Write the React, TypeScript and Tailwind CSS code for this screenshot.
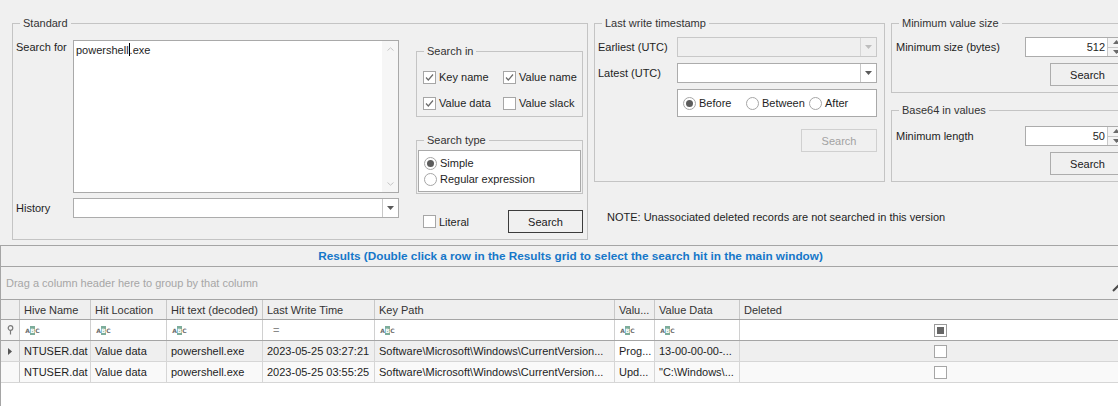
import type { ReactNode } from 'react';
import clsx from 'clsx';

function Group({ title, className, children }: { title: string; className?: string; children?: ReactNode }) {
  return (
    <div className={clsx('relative border border-[#c4c4c4]', className)}>
      <span className="absolute -top-[8px] left-[7px] bg-[#f0f0f0] px-[3px] leading-[14px] text-[#333]">{title}</span>
      {children}
    </div>
  );
}

function Check({ checked }: { checked?: boolean }) {
  return (
    <span className="inline-flex h-[13px] w-[13px] shrink-0 items-center justify-center border border-[#a6a6a6] bg-white">
      {checked && (
        <svg width="11" height="11" viewBox="0 0 11 11">
          <path d="M2 5.5 L4.3 8 L9 2.5" fill="none" stroke="#6b6b6b" strokeWidth="1.2" />
        </svg>
      )}
    </span>
  );
}

function Radio({ on }: { on?: boolean }) {
  return (
    <span className="inline-flex h-[13px] w-[13px] shrink-0 items-center justify-center rounded-full border border-[#a6a6a6] bg-white">
      {on && <span className="h-[7px] w-[7px] rounded-full bg-[#5c5c5c]" />}
    </span>
  );
}

function Arrow({ color = '#5a5a5a' }: { color?: string }) {
  return (
    <svg width="7" height="4" viewBox="0 0 7 4">
      <path d="M0 0 H7 L3.5 4 Z" fill={color} />
    </svg>
  );
}

function Combo({ disabled, className }: { disabled?: boolean; className?: string }) {
  return (
    <div
      className={clsx(
        'flex h-[20px] border',
        disabled ? 'border-[#c8c8c8] bg-[#efefef]' : 'border-[#acacac] bg-white',
        className,
      )}
    >
      <div className="flex-1" />
      <div className={clsx('flex w-[16px] items-center justify-center border-l', disabled ? 'border-[#d6d6d6]' : 'border-[#c8c8c8]')}>
        <Arrow color={disabled ? '#bdbdbd' : '#5a5a5a'} />
      </div>
    </div>
  );
}

function Spin({ value }: { value: string }) {
  return (
    <div className="flex h-[20px] w-[100px] border border-[#acacac] bg-white">
      <div className="flex flex-1 items-center justify-end pr-[2px]">{value}</div>
      <div className="flex w-[17px] flex-col border-l border-[#c8c8c8] bg-[#f4f4f4]">
        <div className="flex flex-1 items-center justify-center border-b border-[#c8c8c8]">
          <svg width="7" height="4" viewBox="0 0 7 4">
            <path d="M0 4 H7 L3.5 0 Z" fill="#6a6a6a" />
          </svg>
        </div>
        <div className="flex flex-1 items-center justify-center">
          <Arrow color="#6a6a6a" />
        </div>
      </div>
    </div>
  );
}

function Button({ label, variant = 'normal', className }: { label: string; variant?: 'normal' | 'default' | 'disabled'; className?: string }) {
  return (
    <div
      className={clsx(
        'flex h-[23px] w-[75px] items-center justify-center border bg-[#f0f0f0]',
        variant === 'default' && 'border-[#3c3c3c] text-[#202020]',
        variant === 'normal' && 'border-[#adadad] text-[#202020]',
        variant === 'disabled' && 'border-[#d0d0d0] text-[#a2a2a2]',
        className,
      )}
    >
      {label}
    </div>
  );
}

function Abc() {
  return (
    <span className="inline-flex h-[9px] items-center font-['DejaVu_Sans',sans-serif] text-[6px] leading-[9px] font-bold text-[#6a6a6a]">
      <span className="w-[5px] text-center">A</span>
      <span className="w-[5px] bg-[#7dad9b] text-center text-white">B</span>
      <span className="w-[5px] text-center">C</span>
    </span>
  );
}

const columns = [
  { name: 'Hive Name', w: 'w-[71px]' },
  { name: 'Hit Location', w: 'w-[76px]' },
  { name: 'Hit text (decoded)', w: 'w-[96px]' },
  { name: 'Last Write Time', w: 'w-[112px]' },
  { name: 'Key Path', w: 'w-[240px]' },
  { name: 'Valu...', w: 'w-[40px]' },
  { name: 'Value Data', w: 'w-[85px]' },
];

const rows = [
  {
    cells: ['NTUSER.dat', 'Value data', 'powershell.exe', '2023-05-25 03:27:21', 'Software\\Microsoft\\Windows\\CurrentVersion...', 'Prog...', '13-00-00-00-...'],
    bg: 'bg-[#efefef]',
    focused: true,
  },
  {
    cells: ['NTUSER.dat', 'Value data', 'powershell.exe', '2023-05-25 03:55:25', 'Software\\Microsoft\\Windows\\CurrentVersion...', 'Upd...', '"C:\\Windows\\...'],
    bg: 'bg-[#f9f9f9]',
    focused: false,
  },
];

export default function App() {
  return (
    <div className="h-[406px] w-[1118px] overflow-hidden bg-[#f0f0f0] font-['Liberation_Sans',Arial,sans-serif] text-[11px] leading-[14px] text-[#1e1e1e]">
      {/* search options */}
      <div className="flex h-[245px] pt-[23px] pl-[12px]">
        <Group title="Standard" className="h-[217px] w-[576px] shrink-0">
          <div className="flex pt-[16px] pl-[3px]">
            <div className="flex flex-col">
              <div className="flex">
                <div className="w-[57px]">Search for</div>
                <div className="flex h-[153px] w-[326px] border border-[#a9a9a9] bg-white">
                  <div className="flex-1 pl-[2px]">
                    powershell<span className="inline-block h-[13px] w-px translate-y-[2px] bg-black" />.exe
                  </div>
                  <div className="flex w-[16px] flex-col items-center justify-between bg-[#f6f6f6] py-[6px]">
                    <svg width="7" height="4" viewBox="0 0 7 4">
                      <path d="M0.5 3.5 L3.5 0.8 L6.5 3.5" fill="none" stroke="#c6c6c6" strokeWidth="1" />
                    </svg>
                    <svg width="7" height="4" viewBox="0 0 7 4">
                      <path d="M0.5 0.5 L3.5 3.2 L6.5 0.5" fill="none" stroke="#c6c6c6" strokeWidth="1" />
                    </svg>
                  </div>
                </div>
              </div>
              <div className="mt-[5px] flex items-center">
                <div className="w-[57px]">History</div>
                <Combo className="w-[326px]" />
              </div>
            </div>

            <div className="mt-[11px] ml-[17px] flex w-[167px] flex-col">
              <Group title="Search in" className="h-[66px]">
                <div className="grid grid-cols-[80px_1fr] gap-y-[12px] pt-[18px] pl-[6px]">
                  <label className="flex items-center gap-[3px]"><Check checked />Key name</label>
                  <label className="flex items-center gap-[3px]"><Check checked />Value name</label>
                  <label className="flex items-center gap-[3px]"><Check checked />Value data</label>
                  <label className="flex items-center gap-[3px]"><Check />Value slack</label>
                </div>
              </Group>
              <Group title="Search type" className="mt-[23px] h-[54px]">
                <div className="mx-[1px] mt-[9px] flex h-[42px] flex-col border border-[#a9a9a9] bg-white pt-[4px] pl-[5px]">
                  <label className="flex h-[16px] items-center gap-[3px]"><Radio on />Simple</label>
                  <label className="flex h-[16px] items-center gap-[3px]"><Radio />Regular expression</label>
                </div>
              </Group>
              <div className="mt-[16px] flex items-center justify-between pl-[7px]">
                <label className="flex items-center gap-[3px]"><Check />Literal</label>
                <Button label="Search" variant="default" />
              </div>
            </div>
          </div>
        </Group>

        <div className="ml-[6px] flex w-[291px] shrink-0 flex-col">
          <Group title="Last write timestamp" className="h-[159px]">
            <div className="flex flex-col gap-[6px] pt-[13px] pl-[3px]">
              <div className="flex items-center">
                <div className="w-[79px]">Earliest (UTC)</div>
                <Combo disabled className="w-[200px]" />
              </div>
              <div className="flex items-center">
                <div className="w-[79px]">Latest (UTC)</div>
                <Combo className="w-[200px]" />
              </div>
              <div className="ml-[79px] flex h-[28px] w-[200px] items-center border border-[#a9a9a9] bg-white pl-[5px]">
                <label className="flex w-[63px] items-center gap-[3px]"><Radio on />Before</label>
                <label className="flex w-[63px] items-center gap-[3px]"><Radio />Between</label>
                <label className="flex items-center gap-[3px]"><Radio />After</label>
              </div>
              <Button label="Search" variant="disabled" className="mt-[6px] ml-[203px] w-[76px]" />
            </div>
          </Group>
          <div className="mt-[28px] ml-[13px] whitespace-nowrap">NOTE: Unassociated deleted records are not searched in this version</div>
        </div>

        <div className="ml-[6px] flex w-[240px] shrink-0 flex-col">
          <Group title="Minimum value size" className="h-[70px]">
            <div className="flex flex-col pt-[13px] pl-[4px]">
              <div className="flex items-center">
                <div className="w-[129px]">Minimum size (bytes)</div>
                <Spin value="512" />
              </div>
              <Button label="Search" className="mt-[6px] ml-[154px]" />
            </div>
          </Group>
          <Group title="Base64 in values" className="mt-[17px] h-[72px]">
            <div className="flex flex-col pt-[15px] pl-[4px]">
              <div className="flex items-center">
                <div className="w-[129px]">Minimum length</div>
                <Spin value="50" />
              </div>
              <Button label="Search" className="mt-[6px] ml-[154px]" />
            </div>
          </Group>
        </div>
      </div>

      {/* results grid */}
      <div className="h-[200px] w-[1140px] border-t border-l border-[#a5a5a5] bg-white">
        <div className="flex h-[21px] items-center justify-center border-b border-[#a5a5a5] bg-[#f0f0f0] text-[11.75px] font-bold text-[#1677c9]">
          Results (Double click a row in the Results grid to select the search hit in the main window)
        </div>
        <div className="relative flex h-[33px] items-center border-b border-[#a5a5a5] bg-[#f0f0f0] pl-[5px] text-[#a6a6a6]">
          Drag a column header here to group by that column
          <svg className="absolute top-[17px] left-[1111px]" width="8" height="8" viewBox="0 0 8 8">
            <path d="M1 7 L7 1" stroke="#4a4a4a" strokeWidth="2" />
          </svg>
        </div>

        <div className="flex h-[20px] border-b border-[#a5a5a5] bg-[#efefef] text-[#333]">
          <div className="w-[19px] border-r border-[#c8c8c8]" />
          {columns.map((c) => (
            <div key={c.name} className={clsx('flex items-center overflow-hidden border-r border-[#c8c8c8] pl-[4px] whitespace-nowrap', c.w)}>
              {c.name}
            </div>
          ))}
          <div className="flex flex-1 items-center pl-[4px]">Deleted</div>
        </div>

        <div className="flex h-[21px] border-b border-[#a5a5a5] bg-white">
          <div className="flex w-[19px] items-center justify-center border-r border-[#c8c8c8] bg-[#f4f4f4]">
            <svg width="7" height="10" viewBox="0 0 7 10">
              <circle cx="3.5" cy="3" r="2.3" fill="none" stroke="#7a7a7a" strokeWidth="1.2" />
              <path d="M3.5 5.3 V9.5" stroke="#7a7a7a" strokeWidth="1.2" />
            </svg>
          </div>
          {columns.map((c) => (
            <div key={c.name} className={clsx('flex items-center border-r border-[#d0d0d0] pl-[5px]', c.w)}>
              {c.name === 'Last Write Time' ? <span className="ml-[5px] text-[#8a8a8a]">=</span> : <Abc />}
            </div>
          ))}
          <div className="flex flex-1 items-center justify-center">
            <span className="flex h-[13px] w-[13px] items-center justify-center border border-[#9a9a9a] bg-white">
              <span className="h-[7px] w-[7px] bg-[#666]" />
            </span>
          </div>
        </div>

        {rows.map((r, i) => (
          <div key={i} className={clsx('flex h-[21px] border-b border-[#d6d6d6]', r.bg)}>
            <div className="flex w-[19px] items-center justify-center border-r border-[#c8c8c8]">
              {r.focused && (
                <svg width="4" height="7" viewBox="0 0 4 7">
                  <path d="M0 0 L4 3.5 L0 7 Z" fill="#555" />
                </svg>
              )}
            </div>
            {r.cells.map((t, j) => (
              <div
                key={j}
                className={clsx(
                  'flex items-center overflow-hidden border-r border-[#d6d6d6] pl-[4px] whitespace-nowrap',
                  columns[j].w,
                  r.focused && j === 5 && 'bg-white',
                )}
              >
                {t}
              </div>
            ))}
            <div className="flex flex-1 items-center justify-center">
              <span className="h-[13px] w-[13px] border border-[#a6a6a6] bg-white" />
            </div>
          </div>
        ))}
      </div>
    </div>
  );
}
